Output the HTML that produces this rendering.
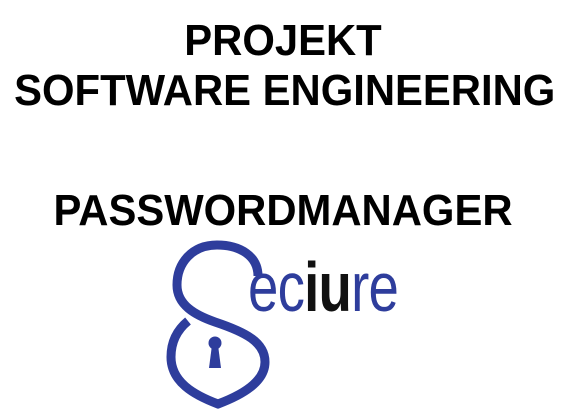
<!DOCTYPE html>
<html><head><style>
html,body{margin:0;padding:0;background:#fff;width:566px;height:414px;overflow:hidden;position:relative}
.t{position:absolute;left:0;width:566px;text-align:center;font-family:"Liberation Sans",sans-serif;font-weight:bold;font-size:44px;line-height:44px;color:#000;white-space:nowrap;transform:scaleX(0.95);transform-origin:283px 0}
.logo{position:absolute;left:248px;top:257px;font-family:"Liberation Sans",sans-serif;font-size:70px;line-height:60px;color:#2e3d9c;transform:scaleX(0.78);transform-origin:left top;white-space:nowrap;letter-spacing:-1px}
.logo b{color:#111}
</style></head><body>
<div class="t" style="top:19px">PROJEKT</div>
<div class="t" style="top:69px">SOFTWARE ENGINEERING</div>
<div class="t" style="top:189px">PASSWORDMANAGER</div>
<svg width="566" height="414" style="position:absolute;left:0;top:0">
<path d="M258,276 C258,256 240,245 217,245 C192,245 177,263 177,285 C177,305 195,315 215,322 C245,332 265,342 265,362 C265,382 242,395 218,404 C194,395 171,382 171,357 C171,342 177,330 188,321" fill="none" stroke="#2e3d9c" stroke-width="9" stroke-linecap="butt"/>
<circle cx="215" cy="343" r="6.5" fill="#2e3d9c"/>
<path d="M212,345 L209,368 L221,368 L218,345 Z" fill="#2e3d9c"/>
</svg>
<div class="logo">ec<b>iu</b>re</div>
</body></html>
